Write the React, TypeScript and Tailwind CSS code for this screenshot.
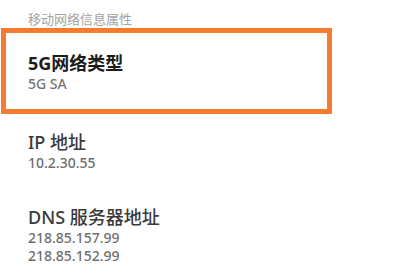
export default function App() {
  const font = { fontFamily: '"Noto Sans", "Noto Sans CJK SC", sans-serif' };
  return (
    <div className="w-[400px] h-[280px] bg-white overflow-hidden" style={font}>
      <div className="pl-[28px] pt-[10px] text-[13px] leading-[18px] text-[#a3a3a3]">移动网络信息属性</div>
      <div className="ml-[1px] w-[331px] border-[5px] border-[#f57b2e] pl-[22px] pt-[18px] pb-[16px]">
        <div className="text-[18px] leading-[24px] font-bold text-[#1c1c1c]">5G网络类型</div>
        <div className="text-[14px] leading-[18px] font-medium text-[#747474]">5G SA</div>
      </div>
      <div className="pl-[28px] pt-[16px]">
        <div className="text-[18px] leading-[24px] font-medium text-[#3a3a3a]">IP 地址</div>
        <div className="text-[14px] leading-[18px] font-medium text-[#6e6e6e]">10.2.30.55</div>
      </div>
      <div className="pl-[28px] pt-[33px]">
        <div className="text-[18px] leading-[24px] font-medium text-[#3a3a3a]">DNS 服务器地址</div>
        <div className="text-[14px] leading-[18px] font-medium text-[#6e6e6e]">218.85.157.99</div>
        <div className="text-[14px] leading-[18px] font-medium text-[#6e6e6e]">218.85.152.99</div>
      </div>
    </div>
  );
}
